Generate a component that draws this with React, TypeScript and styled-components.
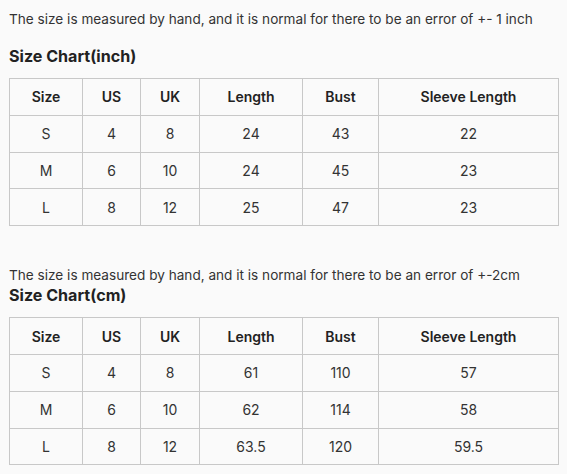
import React from "react";
import styled, { createGlobalStyle } from "styled-components";

const Global = createGlobalStyle`
  html, body { margin: 0; padding: 0; background: #fafafa; }
  body { font-family: Inter, "Noto Sans", sans-serif; color: #333; }
`;

const Page = styled.div`
  padding: 9px 9px 0 9px;
  display: flex;
  flex-direction: column;
`;

const Note = styled.p<{ $top?: number }>`
  margin: ${(p) => p.$top ?? 0}px 0 0 0;
  font-size: 13.6px;
  line-height: 20px;
  color: #333;
`;

const Title = styled.h2<{ $top: number; $lh: number }>`
  margin: ${(p) => p.$top}px 0 0 0;
  font-size: 16.1px;
  font-weight: 700;
  line-height: ${(p) => p.$lh}px;
  color: #222;
`;

const Table = styled.table<{ $top: number }>`
  margin-top: ${(p) => p.$top}px;
  border-collapse: collapse;
  table-layout: fixed;
  width: 549px;
  font-size: 14px;
`;

const HeadCell = styled.th`
  border: 1px solid #c8c8c8;
  height: 35.8px;
  padding: 0;
  font-weight: 600;
  color: #222;
  text-align: center;
`;

const Cell = styled.td`
  border: 1px solid #c8c8c8;
  height: 35.8px;
  padding: 0;
  font-weight: 400;
  color: #333;
  text-align: center;
`;

const widths = [73, 58, 59, 103, 76, 180];
const headers = ["Size", "US", "UK", "Length", "Bust", "Sleeve Length"];

type Row = (string | number)[];

const inchRows: Row[] = [
  ["S", 4, 8, 24, 43, 22],
  ["M", 6, 10, 24, 45, 23],
  ["L", 8, 12, 25, 47, 23],
];

const cmRows: Row[] = [
  ["S", 4, 8, 61, 110, 57],
  ["M", 6, 10, 62, 114, 58],
  ["L", 8, 12, "63.5", 120, "59.5"],
];

function Chart({ rows, top }: { rows: Row[]; top: number }) {
  return (
    <Table $top={top}>
      <colgroup>
        {widths.map((w, i) => (
          <col key={i} style={{ width: w }} />
        ))}
      </colgroup>
      <thead>
        <tr>
          {headers.map((h) => (
            <HeadCell key={h}>{h}</HeadCell>
          ))}
        </tr>
      </thead>
      <tbody>
        {rows.map((r, i) => (
          <tr key={i}>
            {r.map((c, j) => (
              <Cell key={j}>{c}</Cell>
            ))}
          </tr>
        ))}
      </tbody>
    </Table>
  );
}

export default function App() {
  return (
    <>
      <Global />
      <Page>
        <Note>The size is measured by hand, and it is normal for there to be an error of +- 1 inch</Note>
        <Title $top={15} $lh={24}>Size Chart(inch)</Title>
        <Chart rows={inchRows} top={10} />
        <Note $top={39}>The size is measured by hand, and it is normal for there to be an error of +-2cm</Note>
        <Title $top={0} $lh={21}>Size Chart(cm)</Title>
        <Chart rows={cmRows} top={11} />
      </Page>
    </>
  );
}
